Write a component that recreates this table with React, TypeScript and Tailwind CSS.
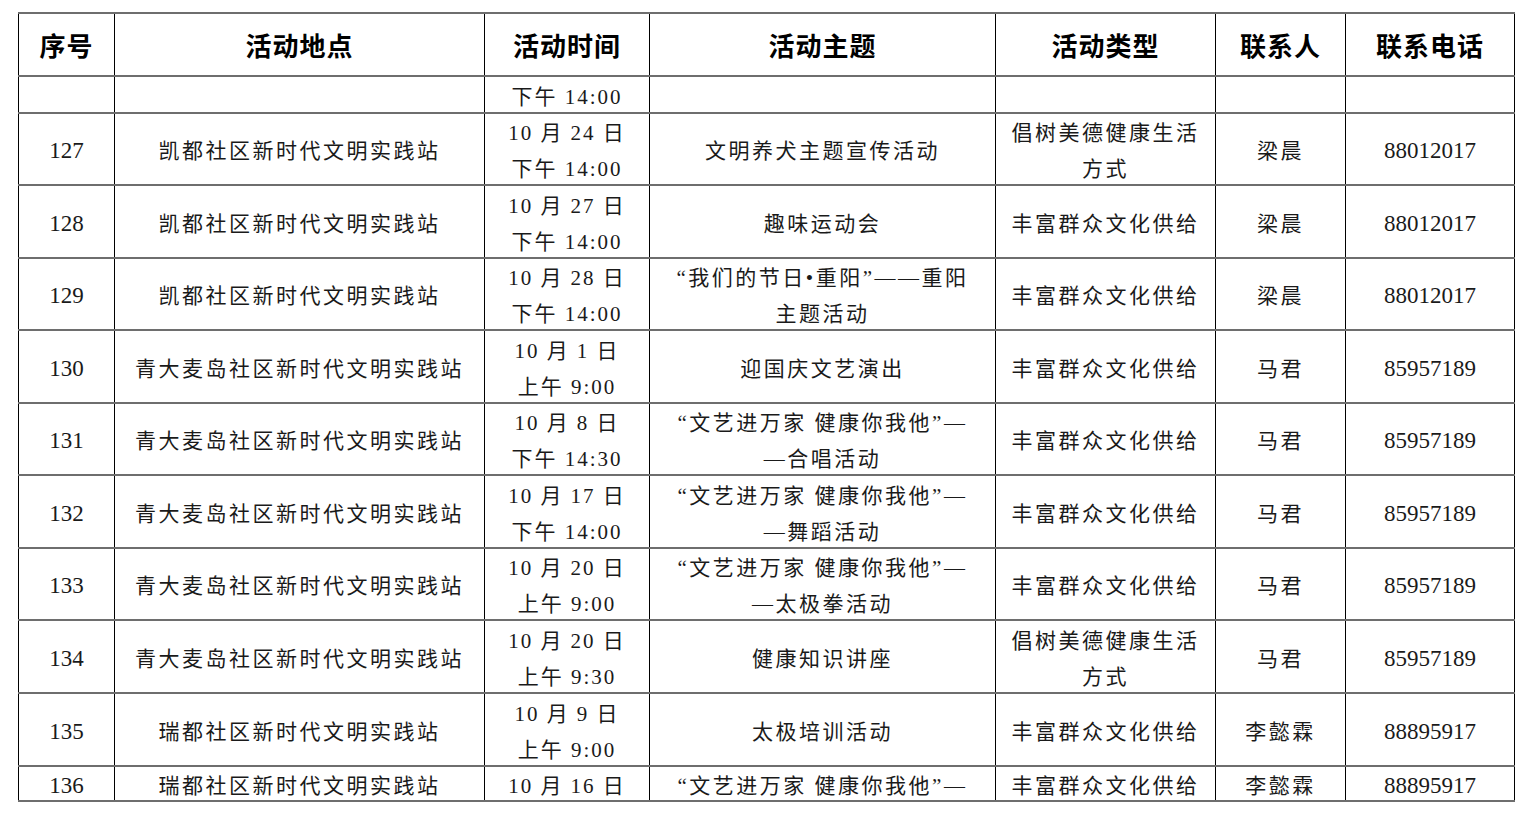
import React from "react";

type Row = {
  no: string;
  place: string;
  time: string[];
  theme: string[];
  kind: string[];
  contact: string;
  phone: string;
  h: string;
};

const HEADERS = ["序号", "活动地点", "活动时间", "活动主题", "活动类型", "联系人", "联系电话"];

const ROWS: Row[] = [
  { no: "", place: "", time: ["下午 14:00"], theme: [], kind: [], contact: "", phone: "", h: "h-[37px]" },
  { no: "127", place: "凯都社区新时代文明实践站", time: ["10 月 24 日", "下午 14:00"], theme: ["文明养犬主题宣传活动"], kind: ["倡树美德健康生活", "方式"], contact: "梁晨", phone: "88012017", h: "h-[72px]" },
  { no: "128", place: "凯都社区新时代文明实践站", time: ["10 月 27 日", "下午 14:00"], theme: ["趣味运动会"], kind: ["丰富群众文化供给"], contact: "梁晨", phone: "88012017", h: "h-[73px]" },
  { no: "129", place: "凯都社区新时代文明实践站", time: ["10 月 28 日", "下午 14:00"], theme: ["“我们的节日•重阳”——重阳", "主题活动"], kind: ["丰富群众文化供给"], contact: "梁晨", phone: "88012017", h: "h-[72px]" },
  { no: "130", place: "青大麦岛社区新时代文明实践站", time: ["10 月 1 日", "上午 9:00"], theme: ["迎国庆文艺演出"], kind: ["丰富群众文化供给"], contact: "马君", phone: "85957189", h: "h-[73px]" },
  { no: "131", place: "青大麦岛社区新时代文明实践站", time: ["10 月 8 日", "下午 14:30"], theme: ["“文艺进万家 健康你我他”—", "—合唱活动"], kind: ["丰富群众文化供给"], contact: "马君", phone: "85957189", h: "h-[72px]" },
  { no: "132", place: "青大麦岛社区新时代文明实践站", time: ["10 月 17 日", "下午 14:00"], theme: ["“文艺进万家 健康你我他”—", "—舞蹈活动"], kind: ["丰富群众文化供给"], contact: "马君", phone: "85957189", h: "h-[73px]" },
  { no: "133", place: "青大麦岛社区新时代文明实践站", time: ["10 月 20 日", "上午 9:00"], theme: ["“文艺进万家 健康你我他”—", "—太极拳活动"], kind: ["丰富群众文化供给"], contact: "马君", phone: "85957189", h: "h-[72px]" },
  { no: "134", place: "青大麦岛社区新时代文明实践站", time: ["10 月 20 日", "上午 9:30"], theme: ["健康知识讲座"], kind: ["倡树美德健康生活", "方式"], contact: "马君", phone: "85957189", h: "h-[73px]" },
  { no: "135", place: "瑞都社区新时代文明实践站", time: ["10 月 9 日", "上午 9:00"], theme: ["太极培训活动"], kind: ["丰富群众文化供给"], contact: "李懿霖", phone: "88895917", h: "h-[73px]" },
  { no: "136", place: "瑞都社区新时代文明实践站", time: ["10 月 16 日"], theme: ["“文艺进万家 健康你我他”—"], kind: ["丰富群众文化供给"], contact: "李懿霖", phone: "88895917", h: "h-[35px]" },
];

const cell =
  "border-x border-x-black border-y-2 border-y-[#6e6e6e] text-center align-middle p-0";

// 36px lines overflow the cell slightly and sit a bit low, as in the source document
function Lines({ lines }: { lines: string[] }) {
  return (
    <div className="-mt-[1px] -mb-[5px]">
      {lines.map((l, i) => (
        <div key={i} className="whitespace-pre">
          {l}
        </div>
      ))}
    </div>
  );
}

export default function App() {
  return (
    <div className="min-h-screen bg-white pl-[18px] pt-[12px]">
      <table
        className="w-[1496px] table-fixed border-collapse text-[#1a1a1a]"
        style={{ fontFamily: '"Liberation Serif", "Noto Sans CJK SC", serif' }}
      >
        <colgroup>
          <col className="w-[96px]" />
          <col className="w-[370px]" />
          <col className="w-[165px]" />
          <col className="w-[346px]" />
          <col className="w-[220px]" />
          <col className="w-[130px]" />
          <col className="w-[169px]" />
        </colgroup>
        <thead>
          <tr className="h-[63px]">
            {HEADERS.map((h) => (
              <th
                key={h}
                className={`${cell} text-[26px] font-bold tracking-[1px] text-black`}
                style={{ fontFamily: '"Noto Sans CJK SC", sans-serif' }}
              >
                {h}
              </th>
            ))}
          </tr>
        </thead>
        <tbody className="text-[21px] leading-[36px]">
          {ROWS.map((r, i) => (
            <tr key={i} className={r.h}>
              <td className={`${cell} text-[23px]`}>
                <Lines lines={r.no ? [r.no] : []} />
              </td>
              <td className={`${cell} tracking-[2.5px]`}>
                <Lines lines={r.place ? [r.place] : []} />
              </td>
              <td className={`${cell} tracking-[2px]`}>
                <Lines lines={r.time} />
              </td>
              <td className={`${cell} tracking-[2.5px]`}>
                <Lines lines={r.theme} />
              </td>
              <td className={`${cell} tracking-[2.5px]`}>
                <Lines lines={r.kind} />
              </td>
              <td className={`${cell} tracking-[2.5px]`}>
                <Lines lines={r.contact ? [r.contact] : []} />
              </td>
              <td className={`${cell} text-[23px]`}>
                <Lines lines={r.phone ? [r.phone] : []} />
              </td>
            </tr>
          ))}
        </tbody>
      </table>
    </div>
  );
}
